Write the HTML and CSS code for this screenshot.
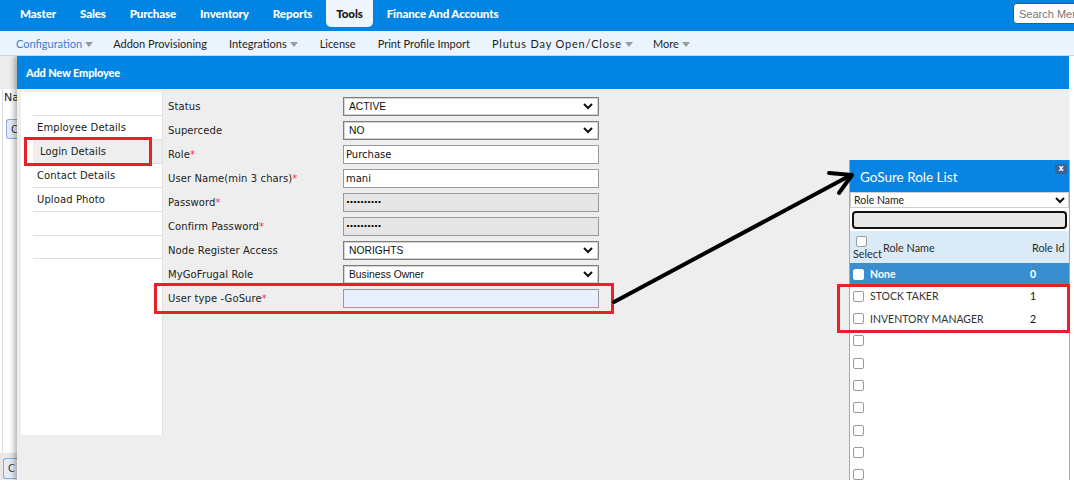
FILE: index.html
```html
<!DOCTYPE html>
<html lang="en">
<head>
<meta charset="utf-8">
<title>Add New Employee</title>
<link rel="stylesheet" href="styles.css">
</head>
<body>
<header class="topnav">
  <nav class="menu">
    <a class="menu-item">Master</a>
    <a class="menu-item">Sales</a>
    <a class="menu-item">Purchase</a>
    <a class="menu-item">Inventory</a>
    <a class="menu-item">Reports</a>
    <a class="menu-item active">Tools</a>
    <a class="menu-item">Finance And Accounts</a>
  </nav>
  <input class="search" type="text" placeholder="Search Menu">
</header>
<nav class="subnav">
  <a class="sub-item current">Configuration<span class="caret"></span></a>
  <a class="sub-item">Addon Provisioning</a>
  <a class="sub-item">Integrations<span class="caret"></span></a>
  <a class="sub-item">License</a>
  <a class="sub-item">Print Profile Import</a>
  <a class="sub-item wide">Plutus Day Open/Close<span class="caret"></span></a>
  <a class="sub-item">More<span class="caret"></span></a>
</nav>
<main class="page">
  <div class="bg-page">
    <div class="bg-top"></div>
    <div class="bg-panel">
      <span class="bg-label">Na</span>
      <button class="bg-btn">C</button>
    </div>
    <div class="bg-bottom"><button class="bg-btn">C</button></div>
  </div>

  <section class="modal">
    <div class="modal-head">Add New Employee</div>
    <div class="modal-body">
      <ul class="tabs">
        <li class="tab">Employee Details</li>
        <li class="tab active">Login Details</li>
        <li class="tab">Contact Details</li>
        <li class="tab">Upload Photo</li>
        <li class="tab"></li>
        <li class="tab"></li>
      </ul>
      <form class="form">
        <div class="row"><label>Status</label><div class="select">ACTIVE<svg class="chev" viewBox="0 0 10 7"><polyline points="1,1 5,5 9,1"/></svg></div></div>
        <div class="row"><label>Supercede</label><div class="select">NO<svg class="chev" viewBox="0 0 10 7"><polyline points="1,1 5,5 9,1"/></svg></div></div>
        <div class="row"><label>Role<span class="req">*</span></label><input class="field" type="text" value="Purchase"></div>
        <div class="row"><label>User Name(min 3 chars)<span class="req">*</span></label><input class="field" type="text" value="mani"></div>
        <div class="row"><label>Password<span class="req">*</span></label><input class="field locked" type="text" value="··········" readonly></div>
        <div class="row"><label>Confirm Password<span class="req">*</span></label><input class="field locked" type="text" value="··········" readonly></div>
        <div class="row"><label>Node Register Access</label><div class="select">NORIGHTS<svg class="chev" viewBox="0 0 10 7"><polyline points="1,1 5,5 9,1"/></svg></div></div>
        <div class="row"><label>MyGoFrugal Role</label><div class="select">Business Owner<svg class="chev" viewBox="0 0 10 7"><polyline points="1,1 5,5 9,1"/></svg></div></div>
        <div class="row"><label>User type -GoSure<span class="req">*</span></label><input class="field picked" type="text" value=""></div>
      </form>
    </div>
  </section>

  <aside class="role-list">
    <div class="rl-head">GoSure Role List<span class="rl-close">x</span></div>
    <div class="rl-select">Role Name<svg class="chev" viewBox="0 0 10 7"><polyline points="1,1 5,5 9,1"/></svg></div>
    <div class="rl-search"></div>
    <div class="rl-table">
      <div class="rl-th">
        <div class="c-sel"><span class="cb"></span><span class="sel-txt">Select</span></div>
        <div class="c-name">Role Name</div>
        <div class="c-id">Role Id</div>
      </div>
      <div class="rl-row none"><span class="cb"></span><span class="r-name">None</span><span class="r-id">0</span></div>
      <div class="rl-row"><span class="cb"></span><span class="r-name">STOCK TAKER</span><span class="r-id">1</span></div>
      <div class="rl-row"><span class="cb"></span><span class="r-name">INVENTORY MANAGER</span><span class="r-id">2</span></div>
      <div class="rl-row"><span class="cb"></span></div>
      <div class="rl-row"><span class="cb"></span></div>
      <div class="rl-row"><span class="cb"></span></div>
      <div class="rl-row"><span class="cb"></span></div>
      <div class="rl-row"><span class="cb"></span></div>
      <div class="rl-row"><span class="cb"></span></div>
      <div class="rl-row"><span class="cb"></span></div>
    </div>
  </aside>

  <div class="mark mark-login"></div>
  <div class="mark mark-usertype"></div>
  <div class="mark mark-roles"></div>
  <svg class="arrow" viewBox="0 0 1074 424" width="1074" height="424">
    <line x1="614" y1="246" x2="851" y2="119"/>
    <polyline points="829,117 852,119 839,137"/>
  </svg>
</main>
<div class="foot"></div>
</body>
</html>
```

FILE: styles.css
```css
* { box-sizing: border-box; }
html, body { margin: 0; padding: 0; }
body {
  width: 1074px;
  height: 498px;
  overflow: hidden;
  background: #ffffff;
  font-family: "DejaVu Sans", Verdana, sans-serif;
  color: #222;
}

/* top navigation */
.topnav {
  height: 31px;
  background: #0284e3;
  display: flex;
  align-items: flex-start;
  overflow: hidden;
}
.menu {
  display: flex;
  gap: 4px;
  padding-left: 10px;
}
.menu-item {
  display: block;
  height: 27px;
  line-height: 28px;
  padding: 0 10px;
  font-family: Lato, sans-serif;
  font-weight: 900;
  font-size: 11.6px;
  color: #ffffff;
  letter-spacing: -0.15px;
}
.menu-item.active {
  background: #eef5fc;
  color: #1a1a1a;
  border-radius: 0 0 5px 5px;
}
.search {
  margin-left: auto;
  margin-right: -49px;
  margin-top: 3px;
  width: 110px;
  height: 21px;
  border: 1px solid #2d6b44;
  border-radius: 4px;
  padding: 0 5px;
  font-family: "Liberation Sans", Arial, sans-serif;
  font-size: 11px;
  background: #fff;
}
.search::placeholder { color: #777; }

/* sub navigation */
.subnav {
  height: 25px;
  background: #ebf3fc;
  border-bottom: 1px solid #c7d7e6;
  display: flex;
  align-items: center;
  padding-left: 16px;
}
.sub-item {
  display: flex;
  align-items: center;
  margin-right: 22px;
  font-family: Lato, sans-serif;
  font-size: 11px;
  color: #1d1d1d;
}
.sub-item:nth-child(2) { margin-left: -2px; }
.sub-item.wide { letter-spacing: 0.8px; margin-right: 20px; }
.sub-item.current { color: #3a7ed3; }
.caret {
  display: inline-block;
  width: 0;
  height: 0;
  margin-left: 3px;
  margin-top: 2px;
  border-left: 4px solid transparent;
  border-right: 4px solid transparent;
  border-top: 5px solid #9a9a9a;
}

/* page area */
.page {
  position: relative;
  height: 424px;
  overflow: hidden;
}
.bg-page {
  width: 21px;
  height: 100%;
  overflow: hidden;
  display: flex;
  flex-direction: column;
}
.bg-top { height: 33px; background: #ececec; }
.bg-panel {
  flex: 1;
  margin-left: 2px;
  border-left: 1px solid #dcdcdc;
  background: #fff;
  padding: 2px 0 0 1px;
  display: flex;
  flex-direction: column;
  align-items: flex-start;
  overflow: hidden;
}
.bg-label { font-size: 11px; line-height: 13px; color: #222; white-space: nowrap; }
.bg-btn {
  margin: 15px 0 0 2px;
  width: 16px;
  height: 20px;
  padding: 0 0 0 4px;
  border: 1px solid #86aee2;
  border-right: none;
  border-radius: 3px 0 0 3px;
  background: #e6ecf5;
  font-size: 10px;
  color: #333;
  font-family: "DejaVu Sans", Verdana, sans-serif;
  text-align: left;
  white-space: nowrap;
  flex: none;
}
.bg-bottom {
  height: 27px;
  background: #e8e8e8;
  padding-left: 2px;
  overflow: hidden;
}
.bg-bottom .bg-btn { margin: 5px 0 0 1px; height: 21px; }

/* modal */
.modal {
  position: absolute;
  left: 17px;
  top: 0;
  width: 1052px;
  height: 424px;
  display: flex;
  flex-direction: column;
  box-shadow: -3px 0 5px rgba(0, 0, 0, 0.28);
}
.modal-head {
  height: 33px;
  background: #0284e3;
  color: #fff;
  font-family: Lato, sans-serif;
  font-weight: 900;
  font-size: 11px;
  line-height: 34px;
  padding-left: 9px;
  letter-spacing: -0.15px;
}
.modal-body {
  flex: 1;
  background: #eeeeee;
  display: flex;
  align-items: flex-start;
  padding: 3px 0 0 4px;
}
.tabs {
  list-style: none;
  margin: 0;
  width: 142px;
  height: 343px;
  background: #fff;
  padding: 23px 0 0 0;
  border-right: 1px solid #e2e2e2;
}
.tab {
  margin-left: 12px;
  height: 24px;
  line-height: 23px;
  padding-left: 4px;
  border-top: 1px solid #dedede;
  font-size: 10px;
  color: #1a1a1a;
  letter-spacing: 0.1px;
}
.tab:last-child { border-bottom: 1px solid #dedede; }
.tab.active { background: #eeeeee; padding-left: 7px; }

/* form */
.form {
  margin: 0 0 0 5px;
  padding-top: 2px;
}
.row {
  display: grid;
  grid-template-columns: 175px 256px;
  align-items: center;
  height: 24px;
}
.row label {
  font-size: 10px;
  color: #222;
  letter-spacing: 0.1px;
}
.req { color: #ee3b45; }
.select {
  position: relative;
  height: 19px;
  border: 1px solid #7d7d7d;
  box-shadow: inset 0 0 0 1px #d4d4d4;
  background: #fff;
  font-family: "Liberation Sans", Arial, sans-serif;
  font-size: 10.3px;
  line-height: 17px;
  padding-left: 5px;
  color: #111;
}
.chev {
  position: absolute;
  right: 5px;
  top: 5px;
  width: 10px;
  height: 7px;
  fill: none;
  stroke: #111;
  stroke-width: 2;
}
.field {
  height: 19px;
  width: 256px;
  border: 1px solid #9a9a9a;
  background: #fff;
  padding: 0 2px;
  font-family: "DejaVu Sans", Verdana, sans-serif;
  font-size: 10px;
  color: #111;
  outline: none;
}
.field.locked {
  background: #e6e6e6;
  font-weight: 700;
  font-size: 10.5px;
  color: #000;
  letter-spacing: -0.5px;
}
.field.picked { background: #e8f0fe; }

/* role list */
.role-list {
  position: absolute;
  left: 849px;
  top: 104px;
  width: 221px;
  height: 320px;
  background: #fff;
  border-left: 1px solid #a8a8a8;
  border-right: 1px solid #a8a8a8;
  font-family: Lato, sans-serif;
}
.rl-head {
  position: relative;
  height: 32px;
  background: #0a84e2;
  color: #fff;
  font-size: 13.5px;
  line-height: 35px;
  padding-left: 10px;
}
.rl-close {
  position: absolute;
  right: 2px;
  top: 4px;
  width: 12px;
  height: 10px;
  background: #36659a;
  color: #fff;
  font-family: "DejaVu Sans", sans-serif;
  font-size: 8px;
  font-weight: 700;
  line-height: 9px;
  text-align: center;
}
.rl-select {
  position: relative;
  height: 16px;
  border: 1px solid #cfcfcf;
  font-size: 10.5px;
  line-height: 14px;
  padding-left: 3px;
  color: #222;
}
.rl-select .chev { top: 4px; right: 3px; }
.rl-search {
  height: 18px;
  margin: 3px 2px 2px 2px;
  border: 2px solid #111;
  border-radius: 4px;
  background: #e8e8e8;
}
.rl-th {
  display: flex;
  height: 32px;
  background: #dbeaf7;
  color: #2a2a2a;
  font-size: 10.8px;
}
.c-sel {
  width: 33px;
  display: flex;
  flex-direction: column;
  padding: 5px 0 0 3px;
}
.c-sel .cb { margin-left: 3px; }
.sel-txt { margin-top: 1px; line-height: 12px; }
.c-name { width: 149px; padding-top: 10px; }
.c-id { padding-top: 10px; }
.cb {
  display: block;
  width: 11px;
  height: 11px;
  border: 1px solid #9a9a9a;
  border-radius: 2px;
  background: #fff;
  flex: none;
}
.rl-row {
  display: flex;
  align-items: center;
  height: 22.35px;
  padding-left: 3px;
  font-size: 10.5px;
  color: #333;
}
.rl-row .cb { margin-right: 6px; }
.r-name { width: 160px; }
.r-id { color: #111; }
.rl-row.none {
  height: 22px;
  background: #3a8dce;
  color: #fff;
  font-weight: 700;
}
.rl-row.none .cb { border-color: #fff; }
.rl-row.none .r-id { color: #fff; }

/* annotations */
.mark {
  position: absolute;
  border: 3px solid #e8202b;
  pointer-events: none;
}
.mark-login { left: 24px; top: 81px; width: 128px; height: 29px; }
.mark-usertype { left: 154px; top: 227px; width: 460px; height: 31px; }
.mark-roles { left: 837px; top: 228px; width: 233px; height: 49px; }
.arrow {
  position: absolute;
  left: 0;
  top: 0;
  pointer-events: none;
  fill: none;
  stroke: #000;
  stroke-width: 4;
  stroke-linecap: round;
  stroke-linejoin: round;
}
.foot { height: 18px; background: #fff; }
```
